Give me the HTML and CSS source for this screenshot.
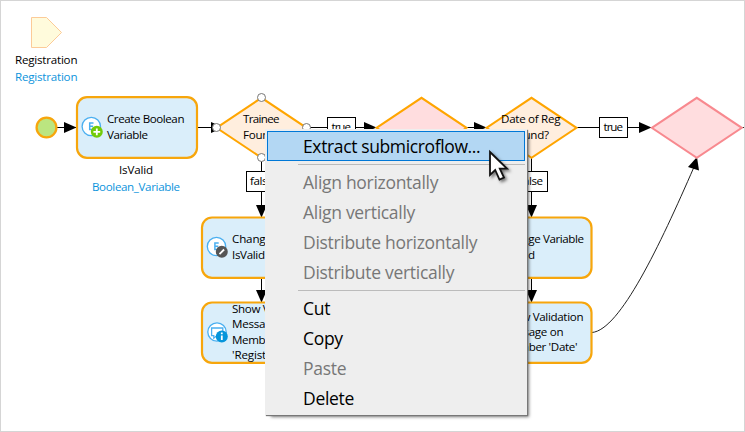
FILE: index.html
```
<!DOCTYPE html>
<html lang="en">
<head>
<meta charset="utf-8">
<title>Microflow editor</title>
<link rel="stylesheet" href="styles.css">
</head>
<body>
<main class="editor">
<svg class="canvas" width="745" height="432" viewBox="0 0 745 432">
  <defs>
    <path id="diamond" d="M0 30 L45 0 L90 30 L45 60 Z"/>
    <path id="right" d="M0 -5.5 L12.5 0 L0 5.5 Z"/>
    <path id="down" d="M-5.5 0 L5.5 0 L0 12.5 Z"/>
    <g id="expression">
      <circle class="ring" r="9.2"/>
      <path class="letter" d="M2.2 -3.4H-1.6V3H2.2M-1.6 -.2H1.8"/>
    </g>
  </defs>

  <path class="parameter" d="M31.5 17.5H46.5L61.5 32.5L46.5 47.5H31.5Z"/>
  <text x="15" y="64" textLength="62.5">Registration</text>
  <text class="type" x="15" y="81" textLength="62.5">Registration</text>

  <path class="edge" d="M57 127.5H76M198 127.5H217M306 127.5H376M467 127.5H486M577 127.5H652M741 127.5H744M261.5 157V217M531.5 157V217M261.5 278V302M531.5 278V302"/>
  <path class="curve" d="M592 332.5C620 330 660 245 694 167"/>
  <use href="#right" x="64" y="127.5"/>
  <use href="#right" x="211" y="127.5"/>
  <use href="#right" x="364" y="127.5"/>
  <use href="#right" x="474" y="127.5"/>
  <use href="#right" x="639" y="127.5"/>
  <use href="#down" x="261.5" y="205"/>
  <use href="#down" x="531.5" y="205"/>
  <use href="#down" x="261.5" y="290"/>
  <use href="#down" x="531.5" y="290"/>
  <path d="M697 157L688 167L699 170.5Z"/>

  <circle class="start" cx="46.5" cy="127.5" r="9.9"/>

  <rect class="activity" x="77" y="97.2" width="120" height="60.6" rx="10"/>
  <rect class="activity" x="202" y="217.5" width="120" height="60.3" rx="10"/>
  <rect class="activity" x="202" y="302.5" width="120" height="60.3" rx="10"/>
  <rect class="activity" x="471" y="217.5" width="120.5" height="60.3" rx="10"/>
  <rect class="activity" x="471" y="302.5" width="120.5" height="60.3" rx="10"/>

  <use class="decision" href="#diamond" x="216.5" y="97.8"/>
  <use class="merge" href="#diamond" x="376.5" y="97.8"/>
  <use class="decision" href="#diamond" x="486.5" y="97.8"/>
  <use class="merge idle" href="#diamond" x="651.8" y="97.8"/>

  <g class="handles">
    <circle cx="216.5" cy="127.5" r="4"/>
    <circle cx="261.5" cy="97.5" r="4"/>
    <circle cx="306.5" cy="127.5" r="4"/>
    <circle cx="261.5" cy="157.5" r="4"/>
  </g>

  <g class="tag">
    <rect x="327.5" y="117.5" width="28" height="20"/>
    <rect x="599.5" y="117.5" width="28" height="20"/>
    <rect x="246.5" y="171.5" width="31" height="20"/>
    <rect x="516.5" y="171.5" width="31" height="20"/>
  </g>
  <text x="331.5" y="131" textLength="19.5">true</text>
  <text x="603.5" y="131" textLength="19.5">true</text>
  <text x="250" y="185" textLength="23.5">false</text>
  <text x="519.5" y="185" textLength="23.5">false</text>

  <use href="#expression" x="91.3" y="126.5"/>
  <circle class="badge add" cx="96.8" cy="131.8" r="6"/>
  <path class="mark" d="M93.4 131.8H100.2M96.8 128.4V135.2"/>
  <use href="#expression" x="216.5" y="246.5"/>
  <circle class="badge edit" cx="221.8" cy="251.8" r="6"/>
  <path class="mark" d="M219.5 254.1L224.1 249.5"/>
  <circle class="ring" cx="217" cy="332" r="9.2"/>
  <path class="bubble" d="M211.6 328H222.8V335.6H217L213.8 338.2V335.6H211.6Z"/>
  <circle class="badge info" cx="221.8" cy="336.5" r="6"/>
  <path class="mark" d="M221.8 335.6V340M221.8 332.6V334.3"/>

  <text x="107" y="123" textLength="77.5">Create Boolean</text>
  <text x="107" y="139" textLength="41">Variable</text>
  <text x="119" y="174" textLength="34">IsValid</text>
  <text class="type" x="92" y="191" textLength="88">Boolean_Variable</text>
  <text x="243" y="123" textLength="36.5">Trainee</text>
  <text x="243" y="139" textLength="38">Found?</text>
  <text x="501" y="123" textLength="59.5">Date of Reg</text>
  <text x="511" y="139" textLength="38">Found?</text>

  <text x="232" y="243" textLength="40">Change</text>
  <text x="232" y="259" textLength="33">IsValid</text>
  <text x="232" y="313" textLength="81.5">Show Validation</text>
  <text x="232" y="328" textLength="62">Message on</text>
  <text x="232" y="344" textLength="44">Member</text>
  <text x="232" y="359" textLength="68">'Registration'</text>
  <text x="502" y="243" textLength="82">Change Variable</text>
  <text x="502" y="259" textLength="33">IsValid</text>
  <text x="502" y="321" textLength="81.5">Show Validation</text>
  <text x="502" y="336" textLength="61.5">Message on</text>
  <text x="502" y="351" textLength="75.5">Member 'Date'</text>
</svg>

<ul class="menu">
  <li class="item active">Extract submicroflow...</li>
  <li class="separator"></li>
  <li class="item disabled">Align horizontally</li>
  <li class="item disabled">Align vertically</li>
  <li class="item disabled">Distribute horizontally</li>
  <li class="item disabled">Distribute vertically</li>
  <li class="separator"></li>
  <li class="item">Cut</li>
  <li class="item">Copy</li>
  <li class="item disabled">Paste</li>
  <li class="item">Delete</li>
</ul>

<svg class="cursor" width="28" height="40" viewBox="0 0 28 40">
  <path d="M2 2V25L7.2 20L11.5 29.5L16 27.6L11.8 18.7H19Z"/>
</svg>
</main>
</body>
</html>
```
FILE: styles.css
```
body {
  margin: 0;
  font-family: "Open Sans", "Noto Sans", sans-serif;
}

.editor {
  position: relative;
  box-sizing: border-box;
  width: 745px;
  height: 432px;
  overflow: hidden;
  border: 1px solid #d5d5d5;
  background: #fff;
}

.canvas {
  display: block;
  margin: -1px;
  font-size: 11.6px;
}

.canvas .type { fill: #0d94dc; }
.parameter { fill: #fffbdc; stroke: #fccb98; }
.edge { fill: none; stroke: #000; }
.curve { fill: none; stroke: #222; }
.start { fill: #bbe580; stroke: #f7a60c; stroke-width: 2.3; }
.activity { fill: #daeefa; stroke: #f7a60c; stroke-width: 2.2; }
.decision { fill: #ffeede; stroke: #ffa500; stroke-width: 2; }
.merge { fill: #ffdddf; stroke: #ffa500; stroke-width: 2; }
.idle { stroke: #f8898f; }
.handles { fill: #fff; stroke: #777; }
.tag { fill: #fff; stroke: #000; }
.ring { fill: #fff; stroke: #4aaff0; stroke-width: 1.3; }
.letter { fill: none; stroke: #4aaff0; stroke-width: 1.5; }
.bubble { fill: #fff; stroke: #4aaff0; stroke-width: 1.3; }
.add { fill: #72cb08; }
.edit { fill: #555; }
.info { fill: #0595db; }
.mark { stroke: #fff; stroke-width: 1.8; }

.menu {
  position: absolute;
  left: 264px;
  top: 128px;
  box-sizing: border-box;
  width: 262px;
  height: 286px;
  margin: 0;
  padding: 2px;
  list-style: none;
  background: #eee;
  box-shadow: 1px 1px 1px #777, 4px 4px 3px -2px rgba(0, 0, 0, 0.5);
}

.item {
  box-sizing: border-box;
  height: 30px;
  padding-left: 36px;
  font-size: 17.5px;
  line-height: 31px;
  letter-spacing: -0.3px;
  white-space: nowrap;
  color: #000;
}

.active {
  padding-left: 35px;
  border: 1px solid #0078d7;
  background: #b3d7f3;
  line-height: 29px;
  letter-spacing: -0.37px;
}

.disabled { color: #777; }

.separator {
  box-sizing: border-box;
  height: 6px;
  margin-left: 31px;
  padding-top: 3px;
}

.separator::before {
  display: block;
  height: 1px;
  background: #bbb;
  content: "";
}

.cursor {
  position: absolute;
  left: 487px;
  top: 149px;
  overflow: visible;
  fill: #fff;
  stroke: #111;
  stroke-width: 1.8;
  filter: drop-shadow(2px 2px 1.5px rgba(0, 0, 0, 0.5));
}
```
